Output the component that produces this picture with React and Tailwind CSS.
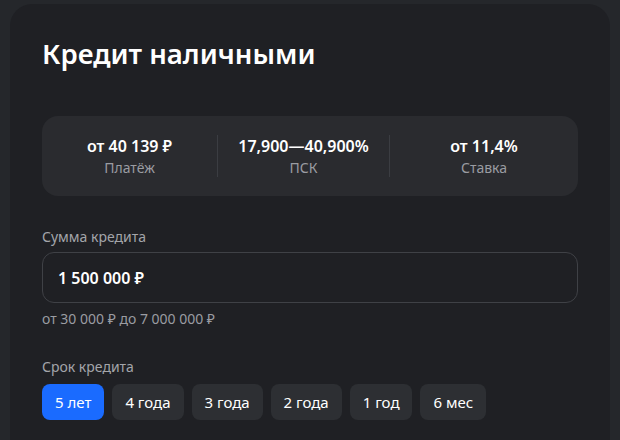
const stats = [
  { value: 'от 40 139 ₽', label: 'Платёж', width: 'w-[175px]' },
  { value: '17,900—40,900%', label: 'ПСК', width: 'w-[172px]' },
  { value: 'от 11,4%', label: 'Ставка', width: 'flex-1' },
]

const terms = ['5 лет', '4 года', '3 года', '2 года', '1 год', '6 мес']

export default function App() {
  return (
    <div
      className="h-[440px] w-[620px] overflow-hidden bg-[#25272b] px-[10px] pt-[4px]"
      style={{ fontFamily: '"Noto Sans", "Open Sans", sans-serif' }}
    >
      <div className="h-[460px] rounded-[22px] bg-[#1f2024] px-[32px] pt-[29px]">
        <h1 className="text-[27.6px] leading-[40px] font-semibold text-white">Кредит наличными</h1>

        <div className="mt-[43px] flex h-[80px] items-center rounded-[16px] bg-[#2a2b2f]">
          {stats.map((s, i) => (
            <div key={s.label} className={'flex items-center ' + s.width}>
              {i > 0 && <div className="h-[42px] w-px bg-[#3b3d42]" />}
              <div className="flex flex-1 flex-col items-center pt-[1px]">
                <div className="text-[16px] leading-[22px] font-semibold text-white">{s.value}</div>
                <div className="mt-[1px] text-[14px] leading-[20px] text-[#9a9ca2]">{s.label}</div>
              </div>
            </div>
          ))}
        </div>

        <div className="mt-[31px] text-[14px] leading-[20px] text-[#a3a5aa]">Сумма кредита</div>
        <div className="mt-[5px] flex h-[51px] items-center rounded-[12px] border border-[#3f4146] px-[15px]">
          <span className="text-[16px] font-semibold text-white">1 500 000 ₽</span>
        </div>
        <div className="mt-[6px] text-[14px] leading-[20px] text-[#9a9ca2]">от 30 000 ₽ до 7 000 000 ₽</div>

        <div className="mt-[28px] text-[14px] leading-[20px] text-[#a3a5aa]">Срок кредита</div>
        <div className="mt-[7px] flex gap-[8px]">
          {terms.map((t, i) => (
            <button
              key={t}
              className={
                'h-[36px] rounded-[8px] px-[13px] text-[15px] text-white ' +
                (i === 0 ? 'bg-[#1a6bff]' : 'bg-[#2d2f33]')
              }
            >
              {t}
            </button>
          ))}
        </div>
      </div>
    </div>
  )
}
